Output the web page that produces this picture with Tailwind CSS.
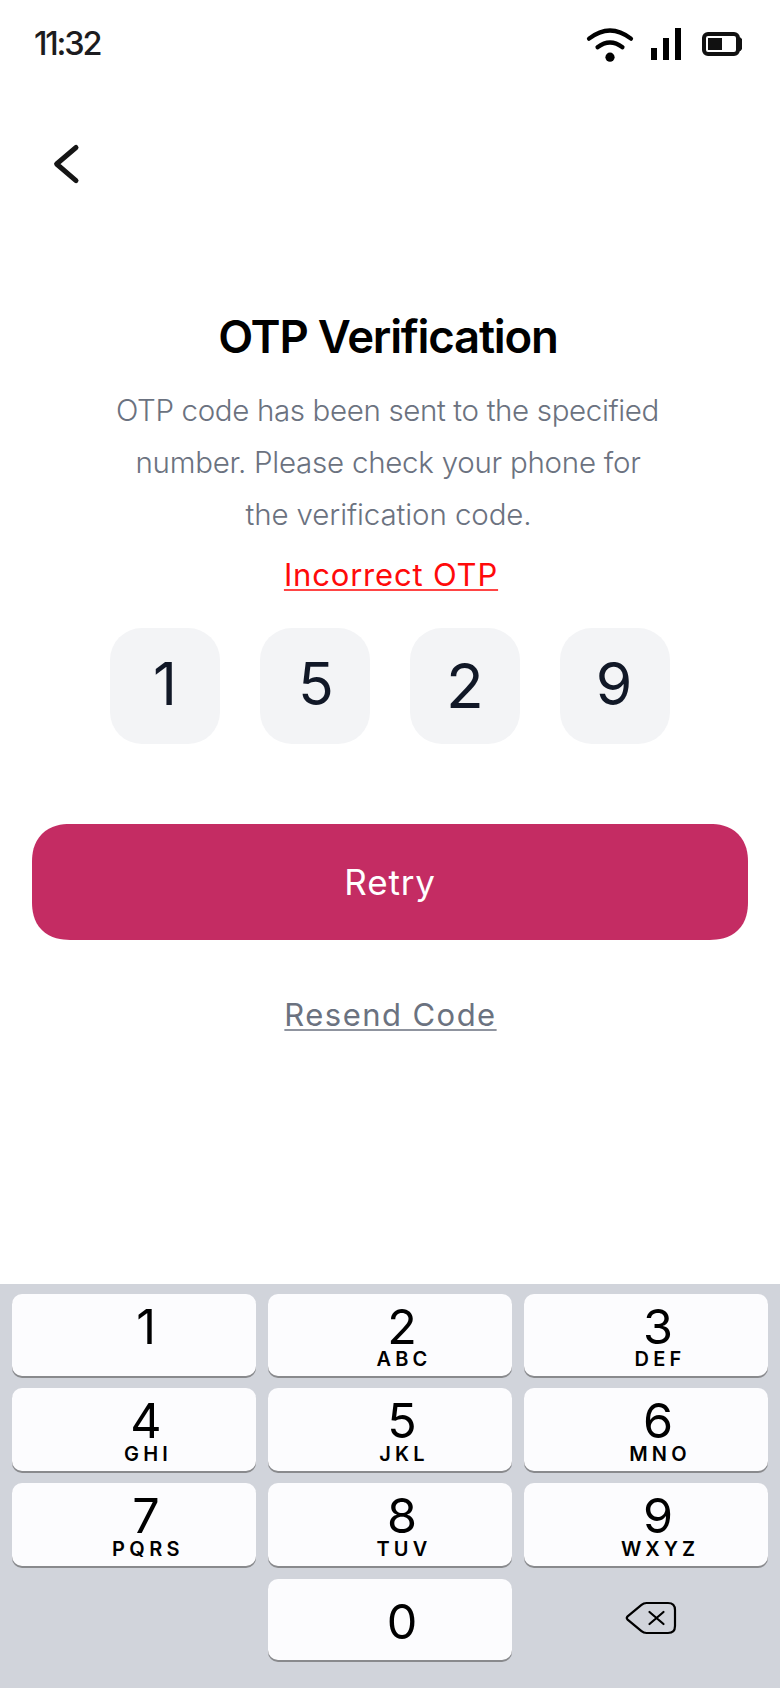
<!DOCTYPE html>
<html lang="en">
<head>
<meta charset="utf-8">
<title>OTP Verification</title>
<script src="https://cdn.jsdelivr.net/npm/@tailwindcss/browser@4"></script>
</head>
<body class="bg-white font-['Inter',sans-serif] text-black">
<div class="flex h-[1688px] w-[780px] flex-col overflow-hidden whitespace-nowrap bg-white">

  <header class="flex h-[88px] items-center justify-between pl-[34px] pr-[37px]">
    <span class="text-[32.5px] leading-[90px] font-medium tracking-[-2.2px] text-[#1c1c20]">11:32</span>
    <svg class="h-[88px] w-[160px]" viewBox="583 0 160 88" fill="none">
      <path d="M589 38.7Q610 22.3 631 38.7M597.5 47.2Q610 37.8 622.5 47.2" stroke="#000" stroke-width="4.2" stroke-linecap="round"/>
      <circle cx="610" cy="57.2" r="4.6" fill="#000"/>
      <path d="M651 48h6v12h-6zM663 38h6v22h-6zM675 28h6v32h-6z" fill="#000"/>
      <rect x="704" y="34" width="34" height="20" rx="4" stroke="#111" stroke-width="4"/>
      <path d="M739 37.5h1.5l1.5 1.5v10l-1.5 2H739zM708 38h14v12h-14z" fill="#111"/>
    </svg>
  </header>

  <nav class="h-[222px] pl-[50px] pt-[52px]">
    <button class="block" aria-label="Back">
      <svg class="h-[48px] w-[32px]" viewBox="50 140 32 48" fill="none" stroke="#151515" stroke-width="5" stroke-linecap="round" stroke-linejoin="round"><path d="M76 147.5 56.6 164 76 180.6"/></svg>
    </button>
  </nav>

  <main class="flex h-[974px] flex-col items-center">
    <h1 class="h-[52px] pr-[4px] text-[45.5px] leading-[53px] font-semibold tracking-[-1.2px]">OTP Verification</h1>
    <div class="mt-[22px] flex h-[156px] flex-col items-center text-[29.5px] leading-[52px] font-light text-[#6b7280]">
      <span class="pr-[5px] tracking-[-0.36px]">OTP code has been sent to the specified</span>
      <span class="pr-1 tracking-[-0.26px]">number. Please check your phone for</span>
      <span class="pr-[3px] tracking-[-0.1px]">the verification code.</span>
    </div>
    <p class="mt-[11px] h-[47px] pl-[2px] text-[31px] leading-[47px] tracking-[0.82px] text-[#ff0a0a] underline decoration-[#ff4545] decoration-2 underline-offset-[3px] [text-decoration-skip-ink:none]">Incorrect OTP</p>
    <div class="mt-[30px] flex gap-[40px] text-[59px] text-[#111827]">
      <div class="h-[116px] w-[110px] rounded-[32px] bg-[#f3f4f6] text-center leading-[112px]">1</div>
      <div class="h-[116px] w-[110px] rounded-[32px] bg-[#f3f4f6] pl-[2px] text-center leading-[112px]">5</div>
      <div class="h-[116px] w-[110px] rounded-[32px] bg-[#f3f4f6] text-center text-[62px] leading-[116px]">2</div>
      <div class="h-[116px] w-[110px] rounded-[32px] bg-[#f3f4f6] pr-[2px] text-center leading-[112px]">9</div>
    </div>
    <button class="mt-[80px] h-[116px] w-[716px] rounded-[38px] bg-[#c42c63] text-[35px] leading-[116px] tracking-[0.8px] text-white [corner-shape:superellipse(1.2)]">Retry</button>
    <a class="mt-[50px] h-[50px] pl-[1px] text-[31px] leading-[50px] tracking-[1.45px] text-[#6b7280] underline decoration-[#8f949f] decoration-2 underline-offset-[3px] [text-decoration-skip-ink:none]">Resend Code</a>
  </main>

  <section class="grid h-[404px] grid-cols-[244px_244px_244px] grid-rows-[83px_83px_83px_82px] content-start gap-x-[12px] gap-y-[12px] bg-[#d1d4db] px-[12px] pt-[10px] text-[48.5px]">
    <div class="flex h-[82px] flex-col items-center rounded-[10px] bg-[#fcfcfe] pl-[24px] shadow-[0_2px_0_#898a8d]"><span class="h-[48px] pt-[6px] leading-[54px]">1</span></div>
    <div class="flex h-[82px] flex-col items-center rounded-[10px] bg-[#fcfcfe] pl-[24px] shadow-[0_2px_0_#898a8d]"><span class="h-[48px] pt-[6px] leading-[54px]">2</span><span class="pl-[4px] text-[20px] leading-[34px] font-semibold tracking-[4.2px]">ABC</span></div>
    <div class="flex h-[82px] flex-col items-center rounded-[10px] bg-[#fcfcfe] pl-[24px] shadow-[0_2px_0_#898a8d]"><span class="h-[48px] pt-[6px] leading-[54px]">3</span><span class="pl-[4px] text-[20px] leading-[34px] font-semibold tracking-[4.2px]">DEF</span></div>

    <div class="-mt-px flex h-[83px] flex-col items-center rounded-[10px] bg-[#fcfcfe] pl-[24px] shadow-[0_2px_0_#898a8d]"><span class="h-[49px] pt-[6px] leading-[54px]">4</span><span class="pl-[4px] text-[20px] leading-[34px] font-semibold tracking-[4.2px]">GHI</span></div>
    <div class="-mt-px flex h-[83px] flex-col items-center rounded-[10px] bg-[#fcfcfe] pl-[24px] shadow-[0_2px_0_#898a8d]"><span class="h-[49px] pt-[6px] leading-[54px]">5</span><span class="pl-[4px] text-[20px] leading-[34px] font-semibold tracking-[4.2px]">JKL</span></div>
    <div class="-mt-px flex h-[83px] flex-col items-center rounded-[10px] bg-[#fcfcfe] pl-[24px] shadow-[0_2px_0_#898a8d]"><span class="h-[49px] pt-[6px] leading-[54px]">6</span><span class="pl-[4px] text-[20px] leading-[34px] font-semibold tracking-[4.2px]">MNO</span></div>

    <div class="-mt-px flex h-[83px] flex-col items-center rounded-[10px] bg-[#fcfcfe] pl-[24px] shadow-[0_2px_0_#898a8d]"><span class="h-[49px] pt-[6px] leading-[54px]">7</span><span class="pl-[4px] text-[20px] leading-[34px] font-semibold tracking-[4.4px]">PQRS</span></div>
    <div class="-mt-px flex h-[83px] flex-col items-center rounded-[10px] bg-[#fcfcfe] pl-[24px] shadow-[0_2px_0_#898a8d]"><span class="h-[49px] pt-[6px] leading-[54px]">8</span><span class="pl-[4px] text-[20px] leading-[34px] font-semibold tracking-[4.2px]">TUV</span></div>
    <div class="-mt-px flex h-[83px] flex-col items-center rounded-[10px] bg-[#fcfcfe] pl-[24px] shadow-[0_2px_0_#898a8d]"><span class="h-[49px] pt-[6px] leading-[54px]">9</span><span class="pl-[4px] text-[20px] leading-[34px] font-semibold tracking-[4px]">WXYZ</span></div>

    <div></div>
    <div class="flex h-[81px] flex-col items-center rounded-[10px] bg-[#fcfcfe] pl-[24px] shadow-[0_2px_0_#898a8d]"><span class="leading-[86px]">0</span></div>
    <div class="flex justify-center pl-[10px] pt-[19px]">
      <svg class="h-[40px] w-[56px]" viewBox="623 1598 56 40" fill="none" stroke="#000" stroke-width="2.2" stroke-linecap="round" stroke-linejoin="round"><path d="M627.6 1616.4 641.5 1604.8Q643.6 1603 646.5 1603H668Q675 1603 675 1610V1626Q675 1633 668 1633H646.5Q643.6 1633 641.5 1631.2L627.6 1619.6Q626 1618 627.6 1616.4ZM649.5 1612 663.5 1624M663.5 1612 649.5 1624"/></svg>
    </div>
  </section>
</div>
</body>
</html>
